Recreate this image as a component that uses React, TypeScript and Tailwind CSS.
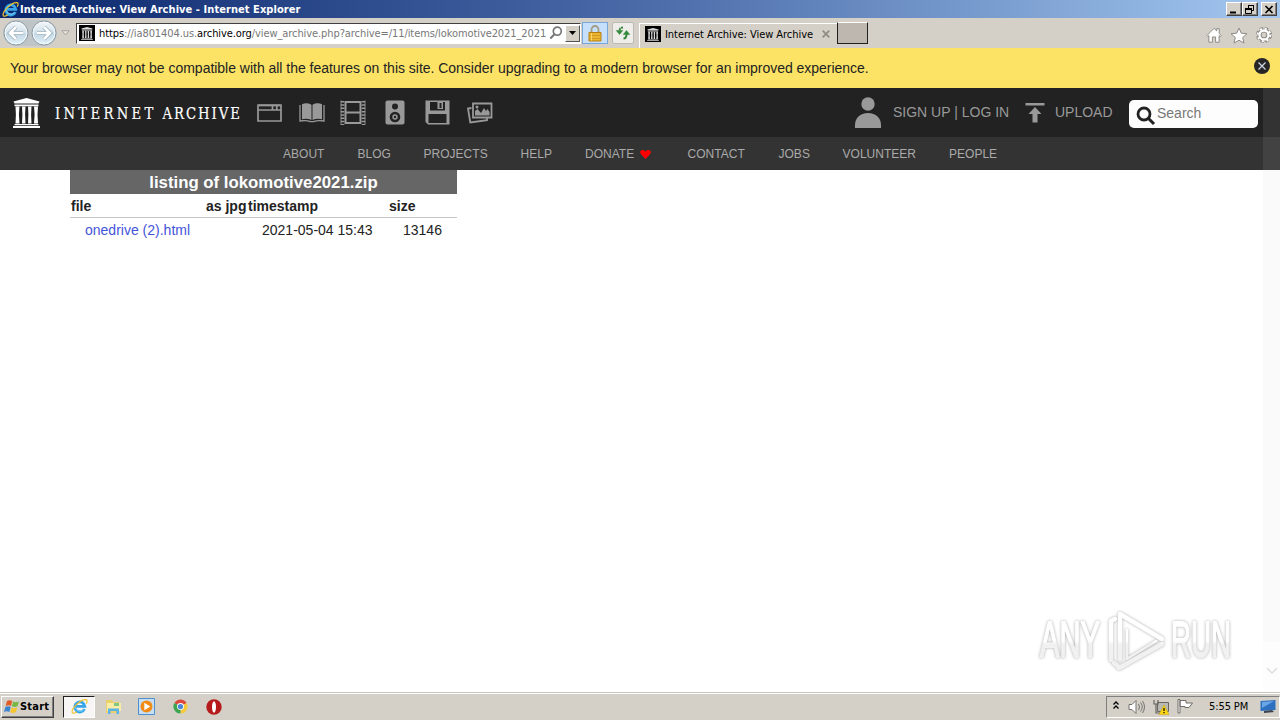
import type { ReactNode } from "react";

const topNav = [
  { label: "ABOUT", width: "w-[74.5px]" },
  { label: "BLOG", width: "w-[66px]" },
  { label: "PROJECTS", width: "w-[97px]" },
  { label: "HELP", width: "w-[64.5px]" },
  { label: "DONATE", width: "w-[102.500px]", heart: true },
  { label: "CONTACT", width: "w-[91px]" },
  { label: "JOBS", width: "w-[64px]" },
  { label: "VOLUNTEER", width: "w-[106.500px]" },
  { label: "PEOPLE", width: "w-[60px]" },
];

const files = [{ name: "onedrive (2).html", timestamp: "2021-05-04 15:43", size: "13146" }];

function IeLogo({ className }: { className?: string }) {
  return (
    <svg viewBox="0 0 18 18" fill="none" className={className}>
      <path d="M14.2 11.6A5.3 5.3 0 1 1 14.6 8.9H5" stroke="#37a5e8" strokeWidth="3" />
      <path d="M13.3 12.2A5 5 0 0 1 4.6 10" stroke="#88d5fa" strokeWidth="1" />
      <path d="M1.5 15.8C-.5 12 10 1 16 1.8c1.6.3 1 2.7.2 4.2M1.5 15.8c1 .8 3.300-.3 4.600-1.200" stroke="#f2c230" strokeWidth="1.3" />
    </svg>
  );
}

function TempleIcon({ className }: { className?: string }) {
  return (
    <svg viewBox="0 0 27 30" fill="currentColor" className={className}>
      <path d="M13.500 0 26.500 3.500 25.500 5.500H1.500L.500 3.500z" />
      <path d="M1.500 6.500h24v1.800h-24zM1.500 26h24v1.200h-24zM0 28h27v2H0z" />
      <path d="M2.500 8.500h4l-.6 8 .6 9h-4l.4-9zM9 8.500h3.500l-.4 8 .4 9H9l.4-9zM15 8.500h3.500l-.4 8 .4 9H15l.4-9zM21 8.500h4l-.5 8 .5 9h-4l.6-9z" />
    </svg>
  );
}

function Favicon() {
  return (
    <span className="flex h-4 w-4 shrink-0 items-center justify-center bg-black text-[#d8d8d8]">
      <TempleIcon className="h-[13px] w-3" />
    </span>
  );
}

function NavArrow({ flip }: { flip?: boolean }) {
  return (
    <svg viewBox="0 0 26 26" className={flip ? "h-[26px] w-[26px] -scale-x-100" : "h-[26px] w-[26px]"}>
      <defs>
        <linearGradient id="orb" x1="0" y1="0" x2="0" y2="1">
          <stop offset="0" stopColor="#f5f8fa" />
          <stop offset=".48" stopColor="#d3e1ea" />
          <stop offset=".52" stopColor="#c3d7e3" />
          <stop offset="1" stopColor="#e2f4fb" />
        </linearGradient>
      </defs>
      <circle cx="13" cy="13" r="12" fill="url(#orb)" stroke="#8b9aa4" />
      <circle cx="13" cy="13" r="10.800" fill="none" stroke="#f4fafc" />
      <path d="M20 13H7.500M13 7l-6 6 6 6" fill="none" stroke="#93abb9" strokeWidth="4" />
      <path d="M20 13H7.500M13 7l-6 6 6 6" fill="none" stroke="#fff" strokeWidth="2.600" />
    </svg>
  );
}

function WindowButton({ children }: { children: ReactNode }) {
  return (
    <span className="flex h-[14px] w-4 items-center justify-center border border-t-white border-r-[#404040] border-b-[#404040] border-l-white bg-[#d4d0c8] shadow-[inset_-1px_-1px_#808080]">
      <svg viewBox="0 0 12 11" className="h-[11px] w-3" fill="none" stroke="#000">
        {children}
      </svg>
    </span>
  );
}

function TitleBar() {
  return (
    <div className="flex h-[18px] items-center bg-linear-to-r from-[#0b266c] via-[#4a6aa8] to-[#a4c8f0] pr-[3px] pl-[2px]">
      <IeLogo className="h-[17px] w-[17px]" />
      <span className="ml-px flex-1 font-['DejaVu_Sans_Condensed','DejaVu_Sans',sans-serif] text-[11px] leading-[17px] font-bold tracking-[0.06px] whitespace-nowrap text-white">
        Internet Archive: View Archive - Internet Explorer
      </span>
      <WindowButton>
        <path d="M2 8.500h6" strokeWidth="2" />
      </WindowButton>
      <WindowButton>
        <path d="M4 1.500h6M4.500 1v3M9.500 1v5.500H8M1.500 5v4.500h6V5M1 4.500h7M1 5.500h7" />
      </WindowButton>
      <span className="ml-[3px] flex">
        <WindowButton>
          <path d="m2.500 2 7 7M9.500 2l-7 7" strokeWidth="1.600" />
        </WindowButton>
      </span>
    </div>
  );
}

function Toolbar() {
  return (
    <div className="flex h-[30px] items-center bg-[#d4d0c8] pl-[3px] font-['DejaVu_Sans_Condensed','DejaVu_Sans',sans-serif] text-[11px] whitespace-nowrap">
      <div className="flex gap-[2px] rounded-full bg-[#bfc4c6]">
        <NavArrow />
        <NavArrow flip />
      </div>
      <svg viewBox="0 0 9 6" className="ml-1 h-[6px] w-[9px]" fill="#e3e0da" stroke="#aaa69f">
        <path d="M.8.7h7.400L4.500 5z" />
      </svg>
      <div className="ml-[6px] flex h-[21px] w-[505px] items-center border border-t-[#404040] border-r-white border-b-white border-l-[#404040] bg-white pl-[2px]">
        <Favicon />
        <span className="ml-1 w-[449px] pt-[2px] tracking-[-0.085px] text-[#777]">
          <span className="text-black">https</span>://ia801404.us.<span className="text-black">archive.org</span>
          /view_archive.php?archive=/11/items/lokomotive2021_2021
        </span>
        <svg viewBox="0 0 14 14" className="ml-[2px] h-[14px] w-[14px]" fill="none" stroke="#777">
          <circle cx="8.300" cy="5.200" r="4" strokeWidth="1.700" />
          <path d="M5.500 8.300 1.300 12.500" strokeWidth="2" />
        </svg>
        <span className="ml-[2px] flex h-[17px] w-[15px] items-center justify-center border border-t-white border-r-[#555] border-b-[#555] border-l-white bg-[#d4d0c8]">
          <svg viewBox="0 0 7 4" className="h-1 w-[7px]">
            <path d="M0 0h7L3.500 4z" />
          </svg>
        </span>
      </div>
      <span className="ml-[1px] flex h-[22px] w-[26px] items-center justify-center border border-[#77a6dc] bg-[#c6e0fc]">
        <svg viewBox="0 0 14 17" className="h-[17px] w-[14px]">
          <path d="M3.500 8V4.500a3.500 3.500 0 0 1 7 0V8" fill="none" stroke="#a49a81" strokeWidth="1.800" />
          <path d="M1 7.500h12v8.500H1z" fill="#edb52d" stroke="#b67c13" />
          <path d="M1.500 10.500h11M1.500 13.500h11" stroke="#d09a26" />
          <path d="M3.500 8v7.500" stroke="#f8d56c" />
        </svg>
      </span>
      <span className="ml-1 flex h-[22px] w-[22px] items-center justify-center rounded-[2px] border border-[#bcbab5] bg-[#eeedea]">
        <svg viewBox="0 0 16 14" className="h-[14px] w-4" fill="none" stroke="#34883c" strokeWidth="2">
          <path d="M8 1.500C5.500 1.500 4.500 3 4.500 5" strokeDasharray="2 .6" />
          <path d="M1.200 4.500h6.600L4.500 8.500zM8.200 8.500h6.600L11.500 4.500z" fill="#34883c" strokeWidth=".5" />
          <path d="M8.500 12.500c2.500 0 3-1.500 3-4.500" />
        </svg>
      </span>
      <div className="ml-[5px] flex h-[25px] w-[198px] items-center self-end border-t border-l border-white pb-[4px] pl-[5px] text-black">
        <Favicon />
        <span className="ml-1 flex-1 pt-[2px] tracking-[-0.05px]">Internet Archive: View Archive</span>
        <svg viewBox="0 0 8 8" className="mr-[7px] h-2 w-2" stroke="#928c84" strokeWidth="1.800">
          <path d="m.7.7 6.600 6.600M7.300.7.7 7.300" />
        </svg>
      </div>
      <span className="h-[22px] w-[31px] border border-t-white border-r-[#202020] border-b-[#202020] border-l-[#202020] bg-[#bdb7b0]" />
      <div className="mt-[5px] ml-auto flex gap-2 pr-2 text-white">
        <svg viewBox="0 0 16 16" className="h-4 w-4" fill="white" stroke="#8d8a86">
          <path d="M.8 8.600 8 1.300l2.700 2.600V1.700h2.500v4.700l2.100 2.200-1 1-1.200-1v6.600H9.600V10H6.400v5.200H2.900V8.600l-1.100 1z" />
        </svg>
        <svg viewBox="0 0 18 17" className="h-[17px] w-[18px]" fill="white" stroke="#8d8a86">
          <path d="m9 1 2.300 5.200 5.700.5-4.300 3.800 1.300 5.600L9 13.200l-5 2.900 1.300-5.600L1 6.700l5.700-.5z" />
        </svg>
        <svg viewBox="0 0 16 16" className="h-4 w-4" fill="none">
          <circle cx="8" cy="8" r="6.500" stroke="#8d8a86" strokeWidth="3" strokeDasharray="3.300 1.800" />
          <circle cx="8" cy="8" r="4.500" stroke="#8d8a86" strokeWidth="4.200" />
          <circle cx="8" cy="8" r="6.300" stroke="#fff" strokeWidth="2" strokeDasharray="2 2.950" />
          <circle cx="8" cy="8" r="4.500" stroke="#fff" strokeWidth="2.300" />
        </svg>
      </div>
    </div>
  );
}

function MediaIcons() {
  return (
    <div className="ml-[18px] flex items-center text-[#999]">
      <svg viewBox="0 0 25 18" className="h-[18px] w-[25px]" fill="none" stroke="currentColor" strokeWidth="1.700">
        <path d="M1 1h23v16H1zM1 6h23M15.500 1v5M19.800 1v5" />
        <path d="M2 1.500h21" />
      </svg>
      <svg viewBox="0 0 26 20" className="ml-[17px] h-5 w-[26px]" fill="currentColor">
        <path d="M3 1.200C6 0 9 0 12.500 1.700v15.200C9 15.500 6 15.600 3 16.300zM13.500 1.700C17 0 20 0 23 1.200v15.100c-3-.7-6-.8-9.500.6z" />
        <path d="M1 2v16c4-.7 7.500-.6 10.500.7h3c3-1.300 6.500-1.400 10.500-.7V2" fill="none" stroke="currentColor" strokeWidth="1.300" />
      </svg>
      <svg viewBox="0 0 26 25" className="ml-[15px] h-[25px] w-[26px]" fill="none" stroke="currentColor">
        <path d="M5.500 1v23M20.500 1v23M5.500 2h15M5.500 12.500h15M5.500 23h15" strokeWidth="2" />
        <path d="M2.500 1v24M23.500 1v24" strokeWidth="3.500" strokeDasharray="1.500 1.800" />
        <path d="M1 .5v24M25 .5v24" strokeWidth=".8" />
      </svg>
      <svg viewBox="0 0 20 25" className="ml-[19px] h-[25px] w-5">
        <rect x=".5" y=".5" width="19" height="24" rx="2" fill="currentColor" />
        <circle cx="10" cy="6.500" r="3" fill="#222" />
        <circle cx="10" cy="17" r="5.300" fill="#222" />
        <circle cx="10" cy="17" r="2.700" fill="currentColor" />
        <circle cx="10" cy="17" r="1.200" fill="#222" />
      </svg>
      <svg viewBox="0 0 25 25" className="ml-5 h-[25px] w-[25px]">
        <path d="M.5.5h24v24H3l-2.500-2.500z" fill="currentColor" />
        <path d="M5 2h15v8.500H5zM3.500 14h18v9h-18z" fill="#222" />
        <path d="M12.500 1.500H18V9h-5.500z" fill="currentColor" />
        <path d="M14.500 3h2v5h-2z" fill="#222" />
      </svg>
      <svg viewBox="0 0 26 22" className="ml-[17px] h-[22px] w-[26px]" fill="none" stroke="currentColor" strokeWidth="1.800">
        <path d="M6 1.500h18.500v14H6z" />
        <path d="M4.500 6 1 6.500l2.300 14L20 18.200V16" />
        <path d="M8 13.500V9l2.500-2 3.500 4 3-5 2 3 1.500-2 2 3v3.500z" fill="currentColor" stroke="none" />
        <circle cx="10" cy="5" r="1.500" fill="currentColor" stroke="none" />
      </svg>
    </div>
  );
}

function ArchiveHeader() {
  return (
    <header className="flex h-[49px] items-center bg-[#222] pl-[13px] text-[#999]">
      <TempleIcon className="h-[30px] w-[27px] text-white" />
      <span className="ml-[15px] flex w-[184px] items-center justify-between text-[17.500px] whitespace-nowrap text-white">
        <svg
          viewBox="0 0 184 24"
          className="h-6 w-[184px] overflow-visible font-['DejaVu_Serif_Condensed','DejaVu_Serif',serif]"
          fill="currentColor"
          stroke="currentColor"
          strokeWidth=".2"
        >
          <g transform="scale(.84 1)">
            <text x="0" y="18" textLength="117" lengthAdjust="spacing">INTERNET</text>
            <text x="128" y="18" textLength="92" lengthAdjust="spacing">ARCHIVE</text>
          </g>
        </svg>
      </span>
      <MediaIcons />
      <svg viewBox="0 0 26 31" className="ml-auto h-[31px] w-[26px]" fill="currentColor">
        <circle cx="13" cy="7" r="6.700" />
        <path d="M0 31v-3c0-7 5-12 13-12s13 5 13 12v3z" />
      </svg>
      <span className="ml-3 w-[117px] text-[14px] whitespace-nowrap">SIGN UP | LOG IN</span>
      <svg viewBox="0 0 20 20" className="ml-[15px] mr-px h-5 w-5" fill="currentColor">
        <path d="M.500 0h19v2.500H.500zM10 4l6.500 7h-4v8.500h-5V11h-4z" />
      </svg>
      <span className="ml-[9px] w-[58px] text-[14px]">UPLOAD</span>
      <div className="mt-[3px] mr-[5px] ml-4 flex h-7 w-[129px] items-center rounded-[5px] bg-[#fdfdfd] pl-[7px]">
        <svg viewBox="0 0 20 20" className="mt-1 h-5 w-5" fill="none" stroke="#222">
          <circle cx="8" cy="8" r="6" strokeWidth="2.800" />
          <path d="m12.500 12.500 5.500 5.500" strokeWidth="3" />
        </svg>
        <span className="ml-px pb-px text-[14px] text-[#777]">Search</span>
      </div>
      <div className="h-full w-[17px] bg-[#333]" />
    </header>
  );
}

function NavBar() {
  return (
    <nav className="flex h-[33px] items-center bg-[#333] pl-[283px] text-[12px] tracking-[0.02px] text-[#aaa]">
      {topNav.map((item) => (
        <span key={item.label} className={`${item.width} flex shrink-0 items-center pt-px`}>
          {item.label}
          {item.heart && (
            <svg viewBox="0 0 11 9" className="mt-px ml-[6px] h-[9px] w-[11px]" fill="#f00">
              <path d="M5.500 9 .8 4C-.7 2 .7 0 2.500 0c1.400 0 2.400.6 3 1.700C6.100.6 7.100 0 8.500 0c1.800 0 3.200 2 1.700 4z" />
            </svg>
          )}
        </span>
      ))}
      <div className="ml-auto h-full w-[17px] bg-[#424242]" />
    </nav>
  );
}

function Listing() {
  return (
    <div className="ml-[70px] w-[387px] text-[14px] text-[#222]">
      <h1 className="h-6 bg-[#666] pt-px text-center text-[16.800px] leading-6 font-bold text-white">
        listing of lokomotive2021.zip
      </h1>
      <div className="grid h-6 grid-cols-[135px_42px_141px_1fr] border-b border-[#c6c6c6] pl-px leading-6 font-bold whitespace-nowrap">
        <span>file</span>
        <span>as jpg</span>
        <span>timestamp</span>
        <span>size</span>
      </div>
      {files.map((file) => (
        <div key={file.name} className="grid h-6 grid-cols-[177px_141px_1fr] pl-[15px] leading-6 whitespace-nowrap">
          <span className="text-[#4354da]">{file.name}</span>
          <span>{file.timestamp}</span>
          <span>{file.size}</span>
        </div>
      ))}
    </div>
  );
}

function Watermark() {
  return (
    <svg
      viewBox="0 0 204 66"
      className="absolute top-[438px] left-[1036px] h-[66px] w-[204px] overflow-visible font-['Liberation_Sans_Narrow','Liberation_Sans',sans-serif] text-[50px] drop-shadow-[0_0_1.500px_#aaa]"
      fill="url(#sheen)"
      stroke="url(#sheen)"
      strokeWidth="1.800"
      strokeLinejoin="round"
    >
      <defs>
        <linearGradient id="sheen" gradientUnits="userSpaceOnUse" x1="0" y1="0" x2="0" y2="66">
          <stop offset=".5" stopColor="#fff" />
          <stop offset=".55" stopColor="#f1f1f1" />
        </linearGradient>
      </defs>
      <text x="4" y="49" textLength="60" lengthAdjust="spacingAndGlyphs">ANY</text>
      <text x="135" y="49" textLength="60" lengthAdjust="spacingAndGlyphs">RUN</text>
      <g fill="none" strokeWidth="4.500" strokeLinecap="round">
        <path d="M75 52V13l4-2" />
        <path d="M84 51V6l42 25" />
        <path d="M91 22v29l29-18" strokeWidth="2.500" />
        <path d="M83 60l43-24" />
        <path d="M78 55l5 4" />
      </g>
    </svg>
  );
}

function TaskBar() {
  return (
    <footer className="flex h-7 items-center border-t border-[#c9c6c0] bg-[#d4d0c8] pl-px font-['DejaVu_Sans_Condensed','DejaVu_Sans',sans-serif] text-[11px] text-black shadow-[inset_0_1px_#fff]">
      <div className="flex h-[22px] w-[53px] items-center border border-t-white border-r-[#404040] border-b-[#404040] border-l-white pl-[2px] font-bold shadow-[inset_-1px_-1px_#808080]">
        <svg viewBox="0 0 16 15" className="h-[15px] w-4">
          <path d="M3 2c2-1.300 3.700-1 5.300 0L7 7C5.300 6 3.700 5.900 1.700 7z" fill="#e45b26" />
          <path d="M9.200 2.400c2 1 3.700 1 5.800-.2L13.600 7c-2 1.300-3.800 1.200-5.700.3z" fill="#77b843" />
          <path d="M1.400 8c2-1.200 3.700-1 5.300 0l-1.300 5C3.700 12 2 11.900 0 13z" fill="#3c83ce" />
          <path d="M7.600 8.400c2 1 3.700 1 5.700-.2L12 13c-2 1.200-3.800 1.200-5.700.3z" fill="#f4c52f" />
        </svg>
        <span className="pt-[2px] text-[11px] tracking-[0.2px]">Start</span>
      </div>
      <div className="ml-[9px] flex h-[22px] w-8 items-center justify-center border border-t-[#202020] border-r-white border-b-white border-l-[#202020] bg-[#f7f6f4]">
        <IeLogo className="h-[17px] w-[17px]" />
      </div>
      <svg viewBox="0 0 17 16" className="ml-[10px] h-4 w-[17px]">
        <path d="M1 1h6l1 2h6v11H1z" fill="#ead06b" />
        <path d="M2 4h14v8H2z" fill="#f9eda5" />
        <path d="M3 15V9.500h11V15h-2.500v-3h-6v3z" fill="#5cb4e5" />
        <path d="M9 4h5v3H9z" fill="#83c684" />
      </svg>
      <svg viewBox="0 0 17 17" className="ml-[16px] h-[17px] w-[17px]">
        <path d="M.500.500h16v16H.500z" fill="#c7dff5" stroke="#4e8fcd" />
        <circle cx="8.500" cy="8.500" r="6" fill="#f18b16" />
        <path d="m6.300 4.800 6 3.700-6 3.700z" fill="#fff" />
      </svg>
      <svg viewBox="0 0 16 16" className="ml-[18px] h-[15px] w-[15px]">
        <path d="M8 8 1.500 4.200A7.500 7.500 0 0 1 14.500 4.200z" fill="#dc4739" />
        <path d="M8 8l6.500-3.800A7.500 7.500 0 0 1 8 15.500z" fill="#f5ca3d" />
        <path d="M8 8v7.500A7.500 7.500 0 0 1 1.500 4.200z" fill="#3da451" />
        <circle cx="8" cy="8" r="3.700" fill="#fff" />
        <circle cx="8" cy="8" r="2.800" fill="#4c86d9" />
      </svg>
      <svg viewBox="0 0 16 16" className="ml-[18px] h-4 w-4">
        <circle cx="8" cy="8" r="7.700" fill="#b51b1b" />
        <ellipse cx="8" cy="8" rx="2" ry="5.700" fill="#fff" />
      </svg>
      <div className="ml-auto flex h-[22px] w-[174px] items-center border border-t-[#808080] border-r-white border-b-white border-l-[#808080] pl-[6px]">
        <svg viewBox="0 0 6 8" className="mb-1 h-2 w-[6px]" fill="none" stroke="#000" strokeWidth="1.300">
          <path d="m.500 3.500 2.500-2.500 2.500 2.500M.500 7.500 3 5l2.500 2.500" />
        </svg>
        <svg viewBox="0 0 17 16" className="ml-[9px] h-4 w-[17px]" fill="none" stroke="#77736e">
          <path d="M1 5.500h3L8 1.500v13l-4-4H1z" fill="#fff" />
          <path d="M10.500 5q2 3 0 6M12.500 3.500q3.500 4.500 0 9M14.500 2q4 6 0 12" />
        </svg>
        <svg viewBox="0 0 16 16" className="ml-[8px] h-4 w-4">
          <path d="M4.500 3.500h11v9h-11z" fill="#b8b8b4" stroke="#68645f" />
          <path d="M1 1v4h4V1M3 5v9h5" fill="none" stroke="#68645f" strokeWidth="1.200" />
          <path d="M11 6 16 15.500H6z" fill="#fdd616" stroke="#c6a200" strokeWidth=".5" />
          <path d="M11 9v3M11 13v1.200" stroke="#000" strokeWidth="1.200" />
        </svg>
        <svg viewBox="0 0 16 15" className="ml-[8px] h-[15px] w-4" fill="#fff" stroke="#716d68">
          <path d="M1 .500h2V14H1zM3 1.500h6V4h6.500L12 8.500H8V7.500H3z" />
        </svg>
        <span className="ml-4 w-[40px] pt-[2px] tracking-[-0.1px] whitespace-nowrap">5:55 PM</span>
        <svg viewBox="0 0 16 13" className="ml-[11px] h-[13px] w-4">
          <path d="M.500 1 15.500 0v10L.500 11z" fill="#2e70c0" />
          <path d="m2 2 12-1-12 7z" fill="#69a5e4" />
          <path d="m4 11 8-1 2 2-10 1z" fill="#3d434c" />
        </svg>
      </div>
    </footer>
  );
}

export default function App() {
  return (
    <div className="flex h-[720px] w-[1280px] flex-col overflow-hidden bg-white font-['Liberation_Sans',Arial,sans-serif]">
      <TitleBar />
      <Toolbar />
      <div className="flex h-10 items-center justify-between bg-[#fce365] pr-[10px] pl-[10px] text-[14px] tracking-[-0.022px] text-[#222]">
        <span>
          Your browser may not be compatible with all the features on this site. Consider upgrading to a modern browser
          for an improved experience.
        </span>
        <svg viewBox="0 0 16 16" className="mb-1 h-4 w-4">
          <circle cx="8" cy="8" r="8" fill="#262626" />
          <path d="m4.500 4.500 7 7M11.500 4.500l-7 7" stroke="#cbd5e0" strokeWidth="1.300" />
        </svg>
      </div>
      <ArchiveHeader />
      <NavBar />
      <main className="relative flex min-h-0 flex-1 justify-between">
        <Listing />
        <div className="flex w-[17px] flex-col justify-between bg-[#fdfdfd] pb-[18px]">
          <div className="h-[472px] bg-[#fafafa]" />
          <svg viewBox="0 0 12 7" className="mx-auto h-[7px] w-3" fill="none" stroke="#dedede" strokeWidth="1.500">
            <path d="m1 1 5 5 5-5" />
          </svg>
        </div>
        <Watermark />
      </main>
      <TaskBar />
    </div>
  );
}
